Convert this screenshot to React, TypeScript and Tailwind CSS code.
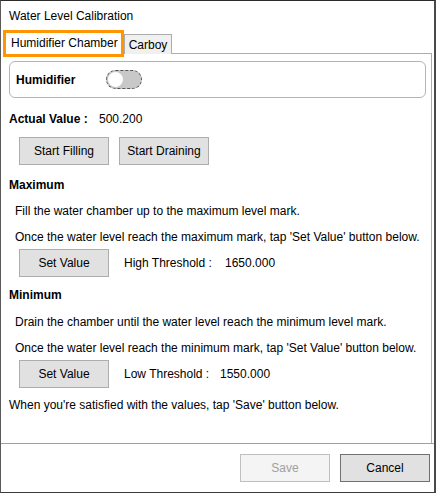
import React from "react";

const btn =
  "w-[90px] h-[28px] bg-[#e1e1e1] border border-[#adadad] flex items-center justify-center text-[12px] text-black";

function Toggle() {
  return (
    <div className="w-[36px] h-[19px] rounded-full bg-[#c8c8c8] border border-dashed border-[#555] flex items-center px-[1px]">
      <div className="w-[15px] h-[15px] rounded-full bg-white" />
    </div>
  );
}

export default function App() {
  return (
    <div className="w-[436px] h-[493px] bg-white flex flex-col border-t border-b border-l border-r-2 border-t-[#2b2b2b] border-b-[#3a3a3a] border-l-[#5a5a5a] border-r-[#4a4a4a] font-['Liberation_Sans',Arial,sans-serif] text-[12px] text-black leading-[16px]">
      {/* TITLE */}
      <div className="h-[29px] pl-[8px] flex items-center pt-[1px]">Water Level Calibration</div>

      {/* TABS */}
      <div className="flex items-end h-[24px] pr-[2px]">
        <div className="relative z-10 ml-[2px] -mb-[3px] h-[27px] w-[121px] border-[3px] border-[#ff9500] bg-white flex items-center pl-[5px] pb-[1px]">
          Humidifier Chamber
        </div>
        <div className="h-[20px] w-[48px] bg-[#f0f0f0] border border-[#acacac] border-b-0 flex items-center justify-center">
          Carboy
        </div>
        <div className="flex-1 h-[1px] bg-[#acacac]" />
      </div>

      {/* PANEL */}
      <div className="flex-1 flex flex-col mr-[2px] border-r border-[#acacac] pt-[7px]">
        <div className="ml-[8px] mr-[5px] h-[37px] border border-[#b4b4b4] rounded-[6px] flex items-center pl-[6px]">
          <span className="font-bold w-[90px]">Humidifier</span>
          <Toggle />
        </div>

        <div className="flex ml-[8px] mt-[13px]">
          <span className="font-bold w-[90px]">Actual Value :</span>
          <span>500.200</span>
        </div>

        <div className="flex gap-[10px] ml-[18px] mt-[10px]">
          <button className={btn}>Start Filling</button>
          <button className={btn}>Start Draining</button>
        </div>

        <div className="ml-[8px] mt-[12px] font-bold">Maximum</div>
        <div className="ml-[14px] mt-[10px]">Fill the water chamber up to the maximum level mark.</div>
        <div className="ml-[14px] mt-[10px]">
          Once the water level reach the maximum mark, tap 'Set Value' button below.
        </div>
        <div className="flex items-center ml-[18px] mt-[4px]">
          <button className={btn}>Set Value</button>
          <span className="ml-[15px] w-[101px]">High Threshold :</span>
          <span>1650.000</span>
        </div>

        <div className="ml-[8px] mt-[10px] font-bold">Minimum</div>
        <div className="ml-[14px] mt-[11px]">
          Drain the chamber until the water level reach the minimum level mark.
        </div>
        <div className="ml-[14px] mt-[10px]">
          Once the water level reach the minimum mark, tap 'Set Value' button below.
        </div>
        <div className="flex items-center ml-[18px] mt-[4px]">
          <button className={btn}>Set Value</button>
          <span className="ml-[15px] w-[96px]">Low Threshold :</span>
          <span>1550.000</span>
        </div>

        <div className="ml-[8px] mt-[9px]">
          When you're satisfied with the values, tap 'Save' button below.
        </div>
      </div>

      {/* FOOTER */}
      <div className="h-[49px] border-t border-[#a0a0a0] flex justify-end items-start gap-[10px] pt-[10px] pr-[4px]">
        <button className="w-[90px] h-[28px] bg-[#f4f4f4] border border-[#bfbfbf] text-[#a0a0a0] flex items-center justify-center">
          Save
        </button>
        <button className="w-[90px] h-[28px] bg-[#e1e1e1] border border-[#707070] flex items-center justify-center">
          Cancel
        </button>
      </div>
    </div>
  );
}
